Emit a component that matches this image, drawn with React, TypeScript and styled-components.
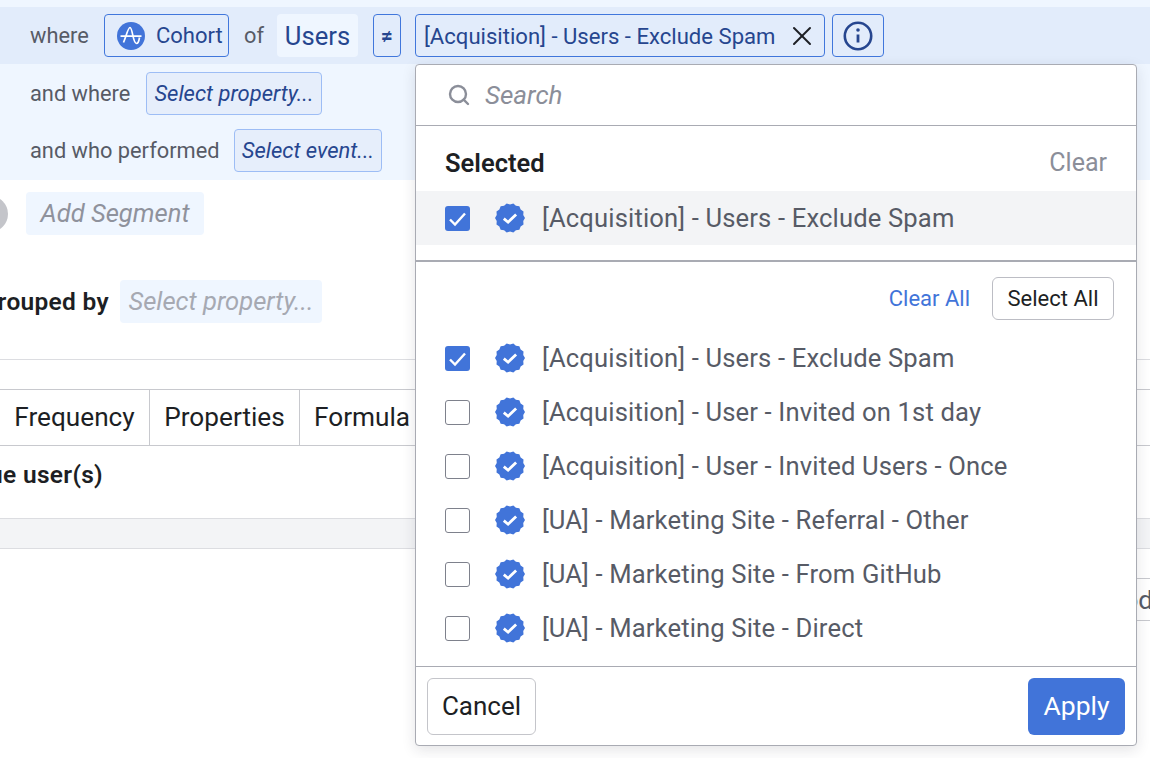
import styled, { createGlobalStyle } from 'styled-components';
import { Search, X } from 'lucide-react';

const GlobalStyle = createGlobalStyle`
  html, body {
    margin: 0;
    padding: 0;
    background: #fff;
  }
  body {
    font-family: Roboto, "Noto Sans", "Liberation Sans", sans-serif;
    font-size: 24px;
    color: #1d1f24;
  }
`;

const Page = styled.div`
  position: relative;
  width: 1150px;
  height: 758px;
  overflow: hidden;
  background: #fff;
`;

const TopStrip = styled.div`
  height: 7px;
  background: #eff6ff;
`;

const ActiveRow = styled.div`
  display: flex;
  align-items: center;
  gap: 14px;
  height: 57px;
  padding-left: 30px;
  box-sizing: border-box;
  background: #e2ecfb;
`;

const SubRows = styled.div`
  display: flex;
  flex-direction: column;
  gap: 14px;
  padding: 8px 0 8px 30px;
  background: #eff6ff;
`;

const SubRow = styled.div`
  display: flex;
  align-items: center;
  gap: 15px;
  height: 43px;
`;

const Label = styled.span<{ $width?: number }>`
  width: ${(p) => (p.$width ? `${p.$width}px` : 'auto')};
  color: #575b66;
  font-size: 21.8px;
  white-space: nowrap;
`;

const OfLabel = styled(Label)`
  padding-left: 1px;
`;

const Chip = styled.div<{ $width?: number }>`
  display: flex;
  align-items: center;
  justify-content: center;
  box-sizing: border-box;
  height: 43px;
  width: ${(p) => (p.$width ? `${p.$width}px` : 'auto')};
  border: 1px solid #4177dc;
  border-radius: 4px;
  color: #26468f;
  font-size: 22px;
  white-space: nowrap;
`;

const CohortChip = styled(Chip)`
  justify-content: flex-start;
  gap: 11px;
  padding-left: 12px;
`;

const UsersChip = styled(Chip)`
  margin-right: 1px;
  border: none;
  background: #eff6ff;
  font-size: 25.6px;
`;

const NotEqualChip = styled(Chip)`
  font-size: 21px;
  font-weight: 700;
`;

const ValueGroup = styled.div`
  display: flex;
  gap: 7px;
`;

const ValueChip = styled(Chip)`
  justify-content: space-between;
  padding: 0 6px 0 8px;
  font-size: 22.1px;
`;

const PromptChip = styled(Chip)`
  border-color: #9dbdf5;
  background: #e6eefb;
  font-style: italic;
`;

const SegmentRow = styled.div`
  display: flex;
  align-items: center;
  gap: 18px;
  height: 43px;
  margin-top: 12px;
`;

const GrayDot = styled.div`
  width: 36px;
  height: 36px;
  margin-left: -28px;
  border-radius: 50%;
  background: #c4c5ca;
`;

const GhostChip = styled.div<{ $width: number }>`
  display: flex;
  align-items: center;
  justify-content: center;
  box-sizing: border-box;
  width: ${(p) => p.$width}px;
  height: 43px;
  padding-bottom: 2px;
  border-radius: 4px;
  background: #eff6ff;
  color: #8f929c;
  font-size: 25.6px;
  font-style: italic;
  white-space: nowrap;
`;

const FaintChip = styled(GhostChip)`
  color: #a6a9b2;
`;

const GroupRow = styled.div`
  display: flex;
  align-items: center;
  gap: 11px;
  height: 43px;
  margin-top: 45px;
`;

const ClippedTitle = styled.div<{ $width: number }>`
  display: flex;
  justify-content: flex-end;
  width: ${(p) => p.$width}px;
  overflow: hidden;
  font-size: 24.5px;
  font-weight: 600;
  letter-spacing: 0.3px;
  white-space: nowrap;
`;

const Rule = styled.div`
  height: 1px;
  margin-top: 36px;
  background: #dcdde1;
`;

const Tabs = styled.div`
  display: flex;
  height: 57px;
  margin-top: 29px;
  box-sizing: border-box;
  border-top: 1px solid #c8c9ce;
  border-bottom: 1px solid #c8c9ce;
`;

const Tab = styled.div<{ $width: number }>`
  display: flex;
  align-items: center;
  justify-content: center;
  box-sizing: border-box;
  width: ${(p) => p.$width}px;
  padding-bottom: 2px;
  border-right: 1px solid #c8c9ce;
  font-size: 26.2px;
  white-space: nowrap;
`;

const SummaryRow = styled.div`
  display: flex;
  align-items: center;
  height: 57px;
  margin-bottom: 15px;
`;

const GrayBand = styled.div`
  height: 31px;
  box-sizing: border-box;
  background: #f3f4f6;
  border-top: 1px solid #dcdde1;
  border-bottom: 1px solid #dcdde1;
`;

const ToolRow = styled.div`
  display: flex;
  justify-content: flex-end;
  align-items: center;
  height: 43px;
  margin: 29px -3px 0 600px;
  box-sizing: border-box;
  border-top: 1px solid #c8c9ce;
  border-bottom: 1px solid #c8c9ce;
  color: #575b66;
  font-size: 26px;
`;

const Popover = styled.div`
  position: absolute;
  left: 415px;
  top: 64px;
  width: 722px;
  height: 682px;
  box-sizing: border-box;
  border: 1px solid #a9abb3;
  border-radius: 4px;
  background: #fff;
  box-shadow: 0 4px 14px rgba(30, 35, 50, 0.12);
`;

const SearchRow = styled.div`
  display: flex;
  align-items: center;
  gap: 14px;
  height: 61px;
  padding-left: 31px;
  box-sizing: border-box;
  border-bottom: 1px solid #a9abb3;
  color: #8b8e99;
  font-size: 26px;
  font-style: italic;
`;

const SelectedHeader = styled.div`
  display: flex;
  align-items: center;
  justify-content: space-between;
  height: 65px;
  padding: 8px 29px 0;
  box-sizing: border-box;
`;

const SelectedTitle = styled.span`
  font-size: 25.5px;
  font-weight: 600;
`;

const ClearLink = styled.span`
  color: #8b8e99;
  font-size: 25px;
`;

const ItemRow = styled.div<{ $shaded?: boolean }>`
  display: flex;
  align-items: center;
  height: 54px;
  padding-left: 29px;
  background: ${(p) => (p.$shaded ? '#f3f4f6' : 'transparent')};
  color: #575b66;
  font-size: 25.6px;
  letter-spacing: 0.15px;
  white-space: nowrap;
`;

const Check = styled.div<{ $on?: boolean }>`
  display: flex;
  align-items: center;
  justify-content: center;
  width: 25px;
  height: 25px;
  box-sizing: border-box;
  margin-right: 25px;
  border: ${(p) => (p.$on ? 'none' : '1px solid #7e818c')};
  border-radius: 3px;
  background: ${(p) => (p.$on ? '#4174d9' : '#fff')};
`;

const BadgeSlot = styled.div`
  display: flex;
  margin-right: 17px;
`;

const ThickRule = styled.div`
  height: 2px;
  margin-top: 15px;
  background: #a9abb3;
`;

const ActionRow = styled.div`
  display: flex;
  justify-content: flex-end;
  align-items: flex-start;
  gap: 22px;
  height: 69px;
  padding: 15px 22px 0 0;
  box-sizing: border-box;
`;

const ClearAll = styled.span`
  color: #4174d9;
  font-size: 22px;
  line-height: 43px;
`;

const SelectAll = styled.div`
  display: flex;
  align-items: center;
  justify-content: center;
  width: 122px;
  height: 43px;
  box-sizing: border-box;
  border: 1px solid #bcbdc4;
  border-radius: 6px;
  font-size: 22px;
`;

const ItemList = styled.div`
  height: 336px;
  box-sizing: border-box;
  padding-bottom: 11px;
  border-bottom: 1px solid #a9abb3;
`;

const Footer = styled.div`
  display: flex;
  justify-content: space-between;
  padding: 11px 11px 0;
`;

const CancelButton = styled.div`
  display: flex;
  align-items: center;
  justify-content: center;
  width: 109px;
  height: 57px;
  box-sizing: border-box;
  padding-bottom: 2px;
  border: 1px solid #c4c5ca;
  border-radius: 6px;
  font-size: 26px;
`;

const ApplyButton = styled.div`
  display: flex;
  align-items: center;
  justify-content: center;
  width: 97px;
  height: 57px;
  box-sizing: border-box;
  padding-bottom: 2px;
  border-radius: 6px;
  background: #4174d9;
  color: #fff;
  font-size: 26.5px;
`;

const scallop = Array.from({ length: 28 }, (_, i) => {
  const r = i % 2 === 0 ? 15 : 13.6;
  const a = (i / 28) * Math.PI * 2;
  return `${(15 + r * Math.cos(a)).toFixed(2)},${(15 + r * Math.sin(a)).toFixed(2)}`;
}).join(' ');

const VerifiedBadge = () => (
  <svg width="30" height="30" viewBox="0 0 30 30">
    <polygon points={scallop} fill="#4174d9" />
    <path d="M8.8 15.6l4.3 3.6 8-7.6" fill="none" stroke="#fff" strokeWidth="2.8" />
  </svg>
);

const CheckMark = () => (
  <svg width="21" height="21" viewBox="0 0 21 21">
    <path d="M3 11.5l5 5 10-11" fill="none" stroke="#fff" strokeWidth="2.4" />
  </svg>
);

const CohortLogo = () => (
  <svg width="28" height="28" viewBox="0 0 28 28">
    <circle cx="14" cy="14" r="14" fill="#4174d9" />
    <path
      d="M3.5 14.2H24.5M6.5 20.5C9 15 11 5.5 13 5.5c2.6 0 2.8 16 6.5 16 2 0 2.6-3.5 3-6"
      fill="none"
      stroke="#fff"
      strokeWidth="1.7"
    />
  </svg>
);

const InfoIcon = () => (
  <svg width="30" height="30" viewBox="0 0 30 30">
    <circle cx="15" cy="15" r="13.2" fill="none" stroke="#26468f" strokeWidth="2.6" />
    <path d="M15 13.5v8" stroke="#26468f" strokeWidth="2.8" />
    <circle cx="15" cy="9" r="1.8" fill="#26468f" />
  </svg>
);

const SPAM = '[Acquisition] - Users - Exclude Spam';

const items = [
  { label: SPAM, checked: true },
  { label: '[Acquisition] - User - Invited on 1st day' },
  { label: '[Acquisition] - User - Invited Users - Once' },
  { label: '[UA] - Marketing Site - Referral - Other' },
  { label: '[UA] - Marketing Site - From GitHub' },
  { label: '[UA] - Marketing Site - Direct' },
];

export default function App() {
  return (
    <Page>
      <GlobalStyle />
      <TopStrip />
      <ActiveRow>
        <Label $width={60}>where</Label>
        <CohortChip $width={125}>
          <CohortLogo />
          Cohort
        </CohortChip>
        <OfLabel $width={19}>of</OfLabel>
        <UsersChip $width={81}>Users</UsersChip>
        <NotEqualChip $width={28}>≠</NotEqualChip>
        <ValueGroup>
          <ValueChip $width={410}>
            {SPAM}
            <X size={32} color="#1d1f24" strokeWidth={1.5} />
          </ValueChip>
          <Chip $width={52}>
            <InfoIcon />
          </Chip>
        </ValueGroup>
      </ActiveRow>
      <SubRows>
        <SubRow>
          <Label $width={101}>and where</Label>
          <PromptChip $width={176}>Select property...</PromptChip>
        </SubRow>
        <SubRow>
          <Label $width={189}>and who performed</Label>
          <PromptChip $width={148}>Select event...</PromptChip>
        </SubRow>
      </SubRows>
      <SegmentRow>
        <GrayDot />
        <GhostChip $width={178}>Add Segment</GhostChip>
      </SegmentRow>
      <GroupRow>
        <ClippedTitle $width={109}>Grouped by</ClippedTitle>
        <FaintChip $width={202}>Select property...</FaintChip>
      </GroupRow>
      <Rule />
      <Tabs>
        <Tab $width={150}>Frequency</Tab>
        <Tab $width={150}>Properties</Tab>
        <Tab $width={125}>Formula</Tab>
      </Tabs>
      <SummaryRow>
        <ClippedTitle $width={103}>Unique user(s)</ClippedTitle>
      </SummaryRow>
      <GrayBand />
      <ToolRow>Period</ToolRow>
      <Popover>
        <SearchRow>
          <Search size={24} color="#8b8e99" strokeWidth={2.4} />
          Search
        </SearchRow>
        <SelectedHeader>
          <SelectedTitle>Selected</SelectedTitle>
          <ClearLink>Clear</ClearLink>
        </SelectedHeader>
        <ItemRow $shaded>
          <Check $on>
            <CheckMark />
          </Check>
          <BadgeSlot>
            <VerifiedBadge />
          </BadgeSlot>
          {SPAM}
        </ItemRow>
        <ThickRule />
        <ActionRow>
          <ClearAll>Clear All</ClearAll>
          <SelectAll>Select All</SelectAll>
        </ActionRow>
        <ItemList>
          {items.map((item) => (
            <ItemRow key={item.label}>
              <Check $on={item.checked}>{item.checked ? <CheckMark /> : null}</Check>
              <BadgeSlot>
                <VerifiedBadge />
              </BadgeSlot>
              {item.label}
            </ItemRow>
          ))}
        </ItemList>
        <Footer>
          <CancelButton>Cancel</CancelButton>
          <ApplyButton>Apply</ApplyButton>
        </Footer>
      </Popover>
    </Page>
  );
}
